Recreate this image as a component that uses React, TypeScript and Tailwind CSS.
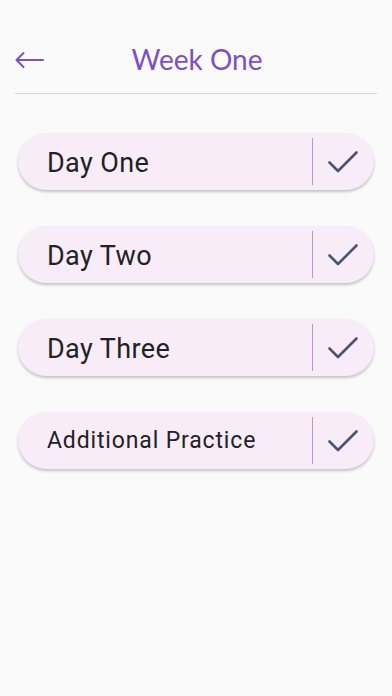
import React from "react";

function Check() {
  return (
    <svg width="30" height="22" viewBox="0 0 30 22" fill="none">
      <path d="M1.5 11.5 L10 20 L28.5 1.5" stroke="#4b5472" strokeWidth="2.6" strokeLinecap="round" strokeLinejoin="round" />
    </svg>
  );
}

function Row({ label, small }: { label: string; small?: boolean }) {
  return (
    <div className="flex h-[57px] items-center rounded-full bg-[#f8ecf9] shadow-[0_2px_3px_rgba(0,0,0,0.22)]">
      <div
        className={
          small
            ? "flex-1 pl-[29px] text-[23px] tracking-[0.85px] text-[#222] pt-[2px]"
            : "flex-1 pl-[29px] text-[27px] tracking-[0.4px] text-[#222] pt-[3px]"
        }
        style={{ fontFamily: "Roboto, 'Noto Sans', sans-serif" }}
      >
        {label}
      </div>
      <div className="h-[47px] w-px bg-[#b99cbc]" />
      <div className="flex w-[61px] items-center justify-center pr-[2px]">
        <Check />
      </div>
    </div>
  );
}

export default function App() {
  return (
    <div className="min-h-[696px] w-[392px] bg-[#fafafa]">
      <div className="mx-[15px] flex h-[94px] items-center border-b border-[#d4d0d6] relative">
        <svg className="absolute left-0 top-[51px]" width="29" height="18" viewBox="0 0 29 18" fill="none">
          <path d="M28 9 H1.5 M8.5 2 L1.5 9 L8.5 16" stroke="#7b4fc8" strokeWidth="2" strokeLinecap="round" strokeLinejoin="round" />
        </svg>
        <div
          className="w-full text-center text-[28px] text-[#7b4fc8] pt-[25px] pl-[2px]"
          style={{ fontFamily: "Lato, 'Open Sans', sans-serif" }}
        >
          Week One
        </div>
      </div>
      <div className="flex flex-col gap-[36px] px-[18px] pt-[39px]">
        <Row label="Day One" />
        <Row label="Day Two" />
        <Row label="Day Three" />
        <Row label="Additional Practice" small />
      </div>
    </div>
  );
}
